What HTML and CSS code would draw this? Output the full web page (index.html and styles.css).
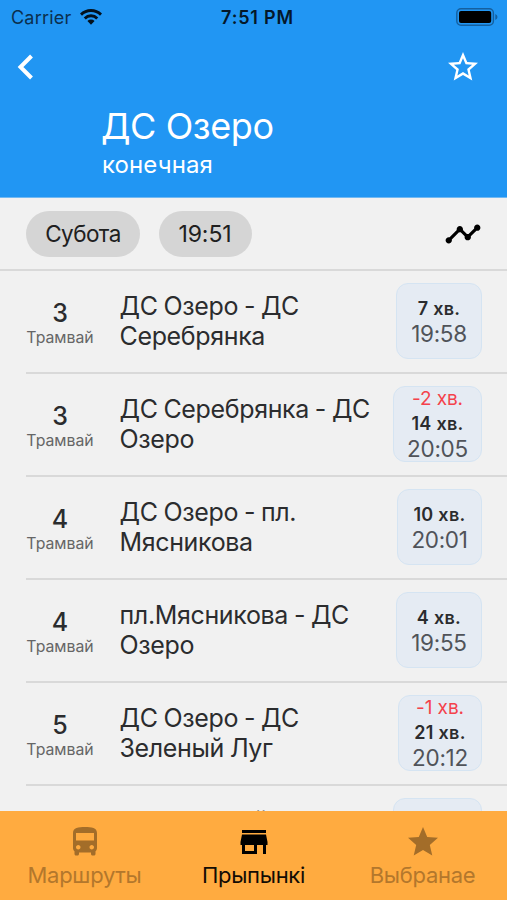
FILE: index.html
```html
<!DOCTYPE html>
<html lang="be">
<head>
<meta charset="utf-8">
<title>ДС Озеро</title>
<link rel="stylesheet" href="styles.css">
</head>
<body>
<div class="app">
  <header class="header">
    <div class="status">
      <div class="carrier"><span>Carrier</span>
        <svg class="wifi" viewBox="0 0 22 16"><path fill="#03111d" d="M0 4.600a15.600 15.600 0 0 1 22 0l-2 2.100a12.700 12.700 0 0 0-18 0zM3.700 8.400a10.300 10.300 0 0 1 14.600 0l-2.100 2.100a7.400 7.400 0 0 0-10.400 0zM7.400 12.100a5.100 5.100 0 0 1 7.200 0L11 15.800z"/></svg>
      </div>
      <div class="clock">7:51 PM</div>
      <div class="power"><svg class="battery" viewBox="0 0 43 18"><rect x=".8" y=".8" width="36.6" height="16.4" rx="4.2" fill="none" stroke="#155f9e" stroke-width="1.4"/><rect x="3" y="3" width="32.2" height="12" rx="2" fill="#000"/><path d="M39.3 6v6q2.2-1 2.2-3t-2.200-3z" fill="#155f9e"/></svg></div>
    </div>
    <div class="toolbar">
      <svg class="back" viewBox="0 0 18 28"><path d="M15.5 3 4.5 14l11 11" fill="none" stroke="#fff" stroke-width="4"/></svg>
      <svg class="fav" viewBox="0 0 24 24"><path fill="#fff" d="M22 9.24l-7.19-.62L12 2 9.19 8.63 2 9.24l5.46 4.73L5.82 21 12 17.27 18.18 21l-1.63-7.03L22 9.24zM12 15.4l-3.76 2.27 1-4.28-3.32-2.88 4.38-.38L12 6.1l1.71 4.04 4.38.38-3.32 2.88 1 4.28L12 15.4z"/></svg>
    </div>
    <h1 class="title">ДС Озеро</h1>
    <p class="subtitle">конечная</p>
  </header>
  <div class="filters">
    <span class="chip chip-day">Субота</span>
    <span class="chip chip-time">19:51</span>
    <svg class="timeline" viewBox="0 0 24 24"><path d="M23 8c0 1.1-.9 2-2 2-.18 0-.35-.02-.51-.07l-3.56 3.55c.05.16.07.34.07.52 0 1.1-.9 2-2 2s-2-.9-2-2c0-.18.02-.36.07-.52l-2.55-2.55c-.16.05-.34.07-.52.07s-.36-.02-.52-.07l-4.55 4.56c.05.16.07.33.07.51 0 1.1-.9 2-2 2s-2-.9-2-2 .9-2 2-2c.18 0 .35.02.51.07l4.56-4.55C8.02 9.36 8 9.18 8 9c0-1.1.9-2 2-2s2 .9 2 2c0 .18-.02.36-.07.52l2.55 2.55c.16-.05.34-.07.52-.07s.36.02.52.07l3.55-3.56C19.02 8.35 19 8.18 19 8c0-1.1.9-2 2-2s2 .9 2 2z"/></svg>
  </div>
  <main class="list">
    <div class="row"><div class="route"><b>3</b><small>Трамвай</small></div><div class="name">ДС Озеро - ДС<br>Серебрянка</div><div class="badge w86"><strong>7 хв.</strong><span>19:58</span></div></div>
    <div class="row"><div class="route"><b>3</b><small>Трамвай</small></div><div class="name">ДС Серебрянка - ДС<br>Озеро</div><div class="badge w89"><em>-2 хв.</em><strong>14 хв.</strong><span>20:05</span></div></div>
    <div class="row"><div class="route"><b>4</b><small>Трамвай</small></div><div class="name">ДС Озеро - пл.<br>Мясникова</div><div class="badge w85"><strong>10 хв.</strong><span>20:01</span></div></div>
    <div class="row"><div class="route"><b>4</b><small>Трамвай</small></div><div class="name">пл.Мясникова - ДС<br>Озеро</div><div class="badge w86"><strong>4 хв.</strong><span>19:55</span></div></div>
    <div class="row"><div class="route"><b>5</b><small>Трамвай</small></div><div class="name">ДС Озеро - ДС<br>Зеленый Луг</div><div class="badge w84"><em>-1 хв.</em><strong>21 хв.</strong><span>20:12</span></div></div>
    <div class="row"><div class="route"></div><div class="name">ДС Зеленый Луг - ДС<br>Озеро</div><div class="badge w89"></div></div>
  </main>
  <nav class="tabs">
    <div class="tab"><svg viewBox="0 0 24 24"><path d="M4 16c0 .88.39 1.67 1 2.220V20c0 .55.45 1 1 1h1c.55 0 1-.45 1-1v-1h8v1c0 .55.45 1 1 1h1c.55 0 1-.45 1-1v-1.780c.61-.55 1-1.340 1-2.220V6c0-3.500-3.580-4-8-4s-8 .5-8 4v10zm3.500 1c-.83 0-1.500-.67-1.500-1.500S6.670 14 7.500 14s1.500.67 1.500 1.500S8.330 17 7.500 17zm9 0c-.83 0-1.500-.67-1.500-1.500s.67-1.500 1.500-1.500 1.500.67 1.500 1.500-.67 1.500-1.500 1.500zm1.500-6H6V6h12v5z"/></svg><span>Маршруты</span></div>
    <div class="tab active"><svg viewBox="0 0 24 24"><path d="M20 4H4v2h16V4zm1 10v-2l-1-5H4l-1 5v2h1v6h10v-6h4v6h2v-6h1zm-9 4H6v-4h6v4z"/></svg><span>Прыпынкі</span></div>
    <div class="tab"><svg viewBox="0 0 24 24"><path d="M12 17.270 18.180 21l-1.640-7.030L22 9.240l-7.190-.61L12 2 9.190 8.630 2 9.240l5.460 4.730L5.820 21z"/></svg><span>Выбранае</span></div>
  </nav>
</div>
</body>
</html>
```
FILE: styles.css
```css
* { box-sizing: border-box; }
body { margin: 0; font-family: Inter, "Liberation Sans", sans-serif; background: #f1f1f1; color: #2b2c2e; }
.app { width: 507px; height: 900px; display: flex; flex-direction: column; overflow: hidden; }
svg { display: block; flex: none; }
.header { height: 198px; flex: none; background: #2196f3; border-bottom: 1px solid #72b9f2; color: #fff; }
.status { height: 34px; display: grid; grid-template-columns: 1fr auto 1fr; align-items: center; color: #04182a; }
.carrier { display: flex; align-items: center; gap: 9px; padding-left: 11px; font-size: 18px; color: #0b2f4e; letter-spacing: .2px; }
.wifi { width: 22px; height: 16px; }
.clock { font-size: 18px; font-weight: 600; letter-spacing: .8px; padding-left: 8px; }
.power { display: flex; justify-content: flex-end; padding-right: 8px; }
.battery { width: 43px; height: 18px; }
.toolbar { height: 66px; display: flex; align-items: center; justify-content: space-between; padding: 0 26px 0 16px; }
.back { width: 18px; height: 28px; }
.fav { width: 36px; height: 36px; }
.title { margin: 3px 0 0 101px; font-size: 36px; line-height: 46px; font-weight: 400; letter-spacing: -.4px; }
.subtitle { margin: 0 0 0 102px; font-size: 24px; line-height: 31px; font-weight: 400; letter-spacing: .1px; }
.filters { height: 73px; flex: none; display: flex; align-items: center; padding: 0 25px 0 26px; border-bottom: 2px solid #d9d9d9; }
.chip { height: 46px; border-radius: 23px; background: #d5d5d5; color: #202020; display: flex; align-items: center; justify-content: center; font-size: 22.5px; letter-spacing: -.6px; }
.chip-day { width: 114px; margin-right: 19px; }
.chip-time { width: 93px; padding-right: 1px; font-size: 23px; letter-spacing: -.1px; }
.timeline { width: 38px; height: 38px; margin-left: auto; }
.list { flex: 1; min-height: 0; overflow: hidden; padding-left: 26px; }
.row { height: 103px; display: flex; align-items: center; padding: 0 25px 1px 0; border-bottom: 2px solid #d9d9d9; }
.route { width: 68px; display: flex; flex-direction: column; align-items: center; padding-top: 4px; }
.route b { font-size: 25px; line-height: 28px; font-weight: 500; }
.route small { font-size: 15.8px; line-height: 20px; color: #666; white-space: nowrap; margin-top: 1px; }
.name { margin-left: 25.500px; font-size: 25px; line-height: 30px; letter-spacing: -.35px; word-spacing: -.8px; white-space: nowrap; flex: 1; padding-bottom: 1px; }
.badge { height: 76px; border: 1px solid #d5e4f2; border-radius: 12px; background: #e5ebf3; display: flex; flex-direction: column; align-items: center; justify-content: center; padding-bottom: 1px; white-space: nowrap; flex: none; }
.w84 { width: 84px; } .w85 { width: 85px; } .w86 { width: 86px; } .w89 { width: 89px; }
.badge em { font-style: normal; font-size: 19px; line-height: 24px; color: #f4424b; letter-spacing: -.1px; }
.badge strong { font-size: 18px; line-height: 25px; font-weight: 600; letter-spacing: .3px; }
.badge span { font-size: 22.500px; line-height: 25px; color: #505359; letter-spacing: -.3px; }
.tabs { height: 89px; flex: none; background: #ffab40; display: grid; grid-template-columns: repeat(3, 1fr); }
.tab { display: flex; flex-direction: column; align-items: center; padding-top: 13px; color: #b3772c; }
.tab svg { width: 36px; height: 36px; fill: #a36d29; }
.tab span { font-size: 22px; line-height: 28px; margin-top: 1px; letter-spacing: -.3px; }
.tab.active { color: #120c04; }
.tab.active svg { fill: #000; }
```
